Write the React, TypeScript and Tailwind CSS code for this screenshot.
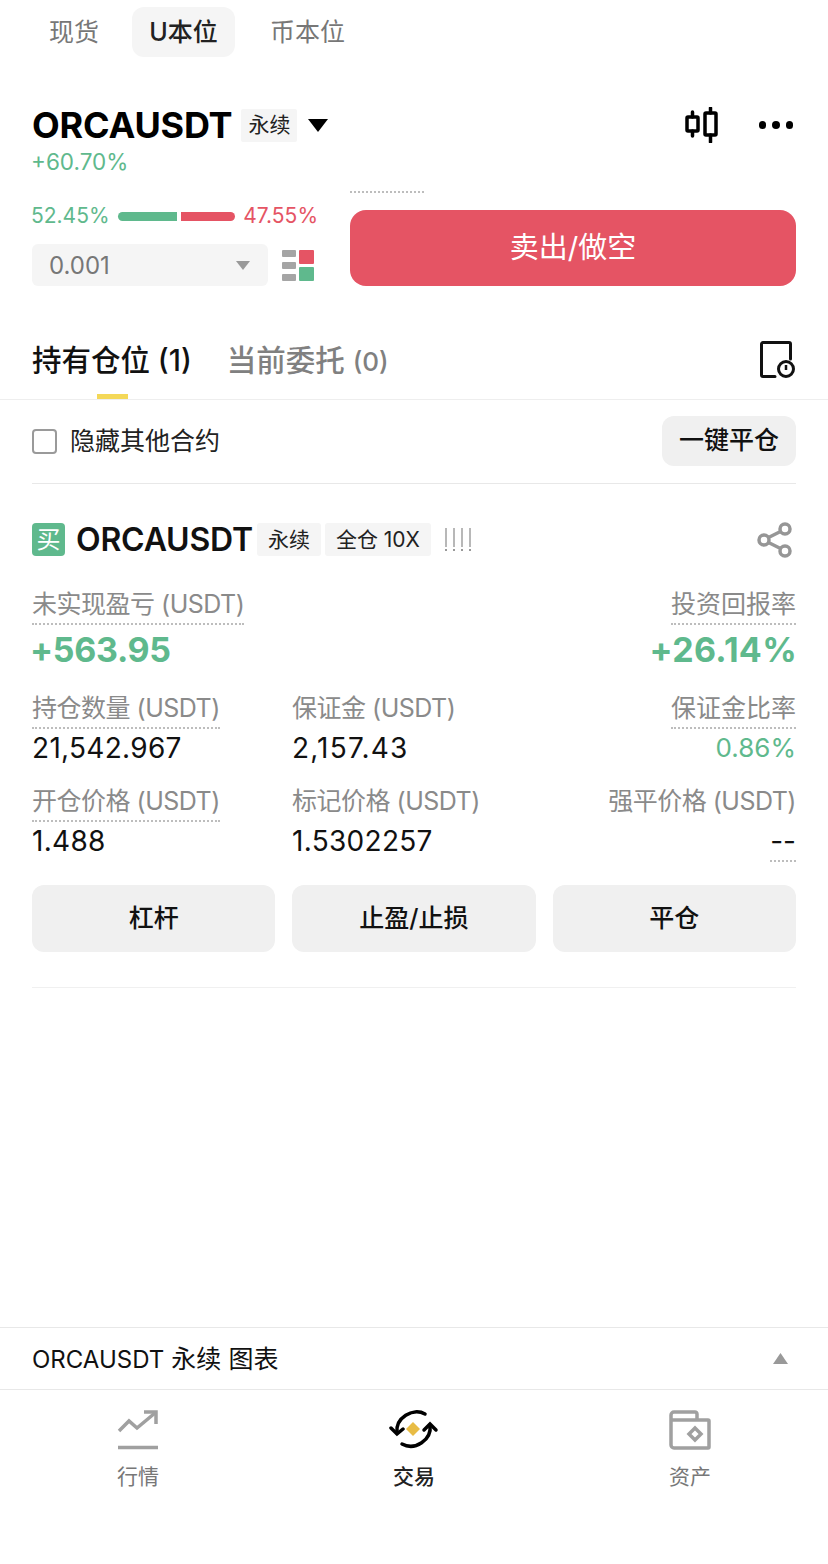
import { ReactNode } from 'react';

const FONT = 'font-["Inter","Noto_Sans_CJK_SC",sans-serif]';

function Label({ children, dotted = true, cjk }: { children: ReactNode; dotted?: boolean; cjk?: boolean }) {
  return (
    <span
      className={`inline-block h-[38px] text-[25px] leading-[34px] text-[#8a8a8a] ${cjk ? '' : 'tracking-[-0.5px]'} ${dotted ? 'border-b-2 border-dotted border-[#bdbdbd]' : ''}`}
    >
      {children}
    </span>
  );
}

function Stat({ label, value, right, dotted, cjk, valueClass }: { label: string; value: string; right?: boolean; dotted?: boolean; cjk?: boolean; valueClass?: string }) {
  return (
    <div className={`flex flex-col ${right ? 'items-end' : 'items-start'}`}>
      <Label dotted={dotted} cjk={cjk}>{label}</Label>
      <span className={`h-[38px] leading-[38px] ${valueClass ?? 'text-[28px] tracking-[0.3px] text-[#111]'}`}>{value}</span>
    </div>
  );
}

function Tag({ children }: { children: ReactNode }) {
  return <span className="flex h-[33px] items-center rounded-[3px] bg-[#f5f5f5] px-[11px] text-[21px] text-[#222]">{children}</span>;
}

function NavItem({ icon, label, active }: { icon: ReactNode; label: string; active?: boolean }) {
  return (
    <div className="flex w-[276px] flex-col items-center">
      <div className="flex h-[46px] items-center justify-center">{icon}</div>
      <span className={`mt-[9px] text-[21px] leading-[30px] ${active ? 'font-medium text-[#222]' : 'text-[#777]'}`}>{label}</span>
    </div>
  );
}

export default function App() {
  return (
    <div className={`flex h-[1564px] w-[828px] flex-col overflow-hidden bg-white ${FONT}`}>
      {/* top tabs */}
      <div className="flex items-center pl-[32px] pt-[7px]">
        <span className="w-[100px] pl-[17px] pt-[2px] text-[25px] text-[#777]">现货</span>
        <span className="flex h-[50px] w-[103px] items-center justify-center rounded-[12px] bg-[#f5f5f5] pt-[2px] text-[25px] font-medium text-[#222]">U本位</span>
        <span className="ml-[35px] pt-[2px] text-[25px] text-[#777]">币本位</span>
      </div>

      {/* symbol */}
      <div className="mt-[46px] flex h-[44px] items-center justify-between pl-[32px] pr-[35px]">
        <div className="flex items-center">
          <span className="text-[36px] font-bold leading-[44px] tracking-[-0.2px] text-black">ORCAUSDT</span>
          <span className="ml-[9px] flex h-[33px] w-[56px] items-center justify-center rounded-[2px] bg-[#f5f5f5] text-[21px] text-[#222]">永续</span>
          <svg width="20" height="13" viewBox="0 0 20 13" className="ml-[11px]">
            <path d="M0 0h20L10 13z" fill="#000" />
          </svg>
        </div>
        <div className="flex items-center gap-[40px]">
          <svg width="34" height="36" viewBox="0 0 34 36" fill="none" stroke="#000" strokeWidth="3.5" strokeLinecap="round">
            <rect x="2" y="10" width="11" height="14" rx="1" />
            <path d="M7.5 5v5M7.5 24v5" />
            <rect x="20" y="6" width="11" height="22" rx="1" />
            <path d="M25.5 1v5M25.5 28v7" />
          </svg>
          <div className="flex gap-[6px]">
            <span className="h-[7.5px] w-[7.5px] rounded-full bg-black" />
            <span className="h-[7.5px] w-[7.5px] rounded-full bg-black" />
            <span className="h-[7.5px] w-[7.5px] rounded-full bg-black" />
          </div>
        </div>
      </div>

      {/* order panel */}
      <div className="flex items-start gap-[32px] pl-[32px] pr-[32px]">
        <div className="flex w-[286px] flex-col">
          <span className="-ml-[1px] text-[22.5px] leading-[30px] text-[#5fb98d]">+60.70%</span>
          <div className="mt-[25px] flex h-[28px] items-center justify-between text-[21px]">
            <span className="-ml-[1px] text-[#5fb98d]">52.45%</span>
            <div className="flex gap-[4px]">
              <span className="h-[9px] w-[59px] rounded-l-full bg-[#5fb98d]" />
              <span className="h-[9px] w-[54px] rounded-r-full bg-[#e55464]" />
            </div>
            <span className="text-[#e55464]">47.55%</span>
          </div>
          <div className="mt-[14px] flex items-center gap-[14px]">
            <div className="flex h-[42px] w-[236px] items-center justify-between rounded-[6px] bg-[#f5f5f5] pl-[17px] pr-[18px]">
              <span className="pt-[2px] text-[24px] text-[#777]">0.001</span>
              <svg width="14" height="9" viewBox="0 0 14 9">
                <path d="M0 0h14L7 9z" fill="#999" />
              </svg>
            </div>
            <div className="grid grid-cols-[14px_15px] gap-x-[3px]">
              <div className="flex flex-col gap-[5px]">
                <span className="h-[7px] rounded-[1px] bg-[#a5a5a5]" />
                <span className="h-[7px] rounded-[1px] bg-[#a5a5a5]" />
                <span className="h-[7px] rounded-[1px] bg-[#a5a5a5]" />
              </div>
              <div className="flex flex-col gap-[3px]">
                <span className="h-[14px] rounded-[1px] bg-[#e55464]" />
                <span className="h-[14px] rounded-[1px] bg-[#5fb98d]" />
              </div>
            </div>
          </div>
        </div>
        <div className="flex flex-1 flex-col pt-[44px]">
          <span className="h-[16px] w-[74px] border-t-2 border-dotted border-[#bdbdbd]" />
          <button className="mt-[3px] h-[76px] rounded-[16px] bg-[#e55464] text-[29px] text-white">卖出/做空</button>
        </div>
      </div>

      {/* position tabs */}
      <div className="mt-[33px] flex h-[81px] items-start border-b border-[#eeeeee] pl-[32px] pr-[34px]">
        <div className="relative flex h-full flex-col">
          <span className="text-[29.5px] font-medium leading-[82px] text-[#111]">持有仓位 (1)</span>
          <span className="absolute bottom-0 left-[65px] h-[5px] w-[31px] bg-[#f4d858]" />
        </div>
        <span className="ml-[35px] text-[29.5px] font-medium leading-[82px] text-[#808080]">
          当前委托 <span className="text-[26px]">(0)</span>
        </span>
        <svg width="36" height="38" viewBox="0 0 36 38" fill="none" stroke="#111" strokeWidth="3" className="-mr-[2px] ml-auto mt-[22px]">
          <path d="M15 35.5H3A1.5 1.5 0 0 1 1.5 34V3A1.5 1.5 0 0 1 3 1.5h26A1.5 1.5 0 0 1 30.5 3v15" strokeLinecap="round" />
          <circle cx="26" cy="28" r="7.5" />
          <path d="M26 24v5" strokeWidth="2.5" />
        </svg>
      </div>

      {/* filter */}
      <div className="mx-[32px] flex h-[84px] items-center justify-between border-b border-[#e8e8e8]">
        <div className="flex items-center gap-[13px]">
          <span className="h-[25px] w-[25px] rounded-[4px] border-2 border-[#9a9a9a]" />
          <span className="text-[25px] text-[#222]">隐藏其他合约</span>
        </div>
        <button className="mb-[2px] h-[50px] w-[134px] rounded-[12px] bg-[#f0f0f0] text-[25px] font-medium text-[#111]">一键平仓</button>
      </div>

      {/* position card */}
      <div className="mx-[32px] flex flex-col border-b border-[#f0f0f0] pb-[35px] pt-[39px]">
        <div className="flex h-[33px] items-center">
          <span className="flex h-[33px] w-[33px] items-center justify-center rounded-[4px] bg-[#5fb98d] text-[24px] text-white">买</span>
          <span className="ml-[11px] text-[32px] font-semibold tracking-[-0.2px] text-[#111]">ORCAUSDT</span>
          <div className="ml-[4px] flex gap-[4px]">
            <Tag>永续</Tag>
            <Tag>全仓 10X</Tag>
          </div>
          <span className="ml-[14px] flex gap-[6px]">
            {[0, 1, 2, 3].map((i) => (
              <span key={i} className="flex flex-col items-center gap-[2px]">
                <span className="h-[19px] w-[2px] bg-[#b8b8b8]" />
                <span className="h-[2px] w-[2px] bg-[#999]" />
              </span>
            ))}
          </span>
          <svg width="36" height="36" viewBox="0 0 36 36" fill="none" stroke="#969696" strokeWidth="3.5" className="ml-auto mr-[3px]">
            <circle cx="7" cy="18" r="5" />
            <circle cx="28" cy="7" r="5" />
            <circle cx="28" cy="29" r="5" />
            <path d="M11.5 15.5 23.5 9.5M11.5 20.5 23.5 26.5" />
          </svg>
        </div>

        <div className="mt-[31px] flex justify-between">
          <div className="flex flex-col items-start">
            <Label>未实现盈亏 (USDT)</Label>
            <span className="-ml-[2px] mt-[1px] text-[34px] font-bold leading-[48px] tracking-[-0.3px] text-[#5fb98d]">+563.95</span>
          </div>
          <div className="flex flex-col items-end">
            <Label cjk>投资回报率</Label>
            <span className="-mr-[1px] mt-[1px] text-[34px] font-bold leading-[48px] tracking-[0.3px] text-[#5fb98d]">+26.14%</span>
          </div>
        </div>

        <div className="mt-[17px] grid grid-cols-[260px_1fr_auto] gap-y-[17px]">
          <Stat label="持仓数量 (USDT)" value="21,542.967" />
          <Stat label="保证金 (USDT)" value="2,157.43" dotted={false} valueClass="text-[28px] tracking-[1.2px] text-[#111]" />
          <Stat label="保证金比率" value="0.86%" right cjk valueClass="text-[26px] text-[#5fb98d]" />
          <Stat label="开仓价格 (USDT)" value="1.488" />
          <Stat label="标记价格 (USDT)" value="1.5302257" dotted={false} />
          <div className="flex flex-col items-end">
            <Label dotted={false}>强平价格 (USDT)</Label>
            <span className="h-[40px] border-b-2 border-dotted border-[#bdbdbd] text-[28px] leading-[38px] text-[#111]">--</span>
          </div>
        </div>

        <div className="mt-[23px] grid grid-cols-3 gap-[17px]">
          {['杠杆', '止盈/止损', '平仓'].map((t) => (
            <button key={t} className="h-[67px] rounded-[12px] bg-[#f0f0f0] text-[25px] font-medium text-[#111]">
              {t}
            </button>
          ))}
        </div>
      </div>

      <div className="flex-1" />

      {/* chart bar */}
      <div className="flex h-[63px] items-center justify-between border-y border-[#e8e8e8] pl-[32px] pr-[40px]">
        <span className="pt-[2px] text-[25px] text-[#111]">
          <span className="text-[24px]">ORCAUSDT</span> 永续 图表
        </span>
        <svg width="15" height="11" viewBox="0 0 15 11">
          <path d="M7.5 0 15 11H0z" fill="#999" />
        </svg>
      </div>

      {/* bottom nav */}
      <div className="flex h-[174px] pt-[17px]">
        <NavItem
          label="行情"
          icon={
            <svg width="42" height="40" viewBox="0 0 42 40" fill="none" stroke="#a0a0a0" strokeWidth="3.5">
              <path d="M2 21 12 11l8 7L38 3" />
              <path d="M27 2h12v12" />
              <path d="M1 37.5h40" />
            </svg>
          }
        />
        <NavItem
          active
          label="交易"
          icon={
            <svg width="50" height="44" viewBox="0 0 50 44" fill="none" stroke="#000" strokeWidth="3.5" strokeLinecap="round">
              <path d="M8 25C6 10 24-1 36 6" />
              <path d="M2 20l6 6 6-5" />
              <path d="M41 17C43 32 26 43 13 36" />
              <path d="M35 22l6-6 6 6" />
              <path d="M24 14l7 7-7 7-7-7z" fill="#e8bc45" stroke="none" />
            </svg>
          }
        />
        <NavItem
          label="资产"
          icon={
            <svg width="42" height="40" viewBox="0 0 42 40" fill="none" stroke="#a0a0a0" strokeWidth="3.5">
              <path d="M28 10V4a2 2 0 0 0-2-2H5a3 3 0 0 0-3 3v30a3 3 0 0 0 3 3h34a1 1 0 0 0 1-1V11a1 1 0 0 0-1-1H2" />
              <path d="M26 18l6 6-6 6-6-6z" />
            </svg>
          }
        />
      </div>
    </div>
  );
}
